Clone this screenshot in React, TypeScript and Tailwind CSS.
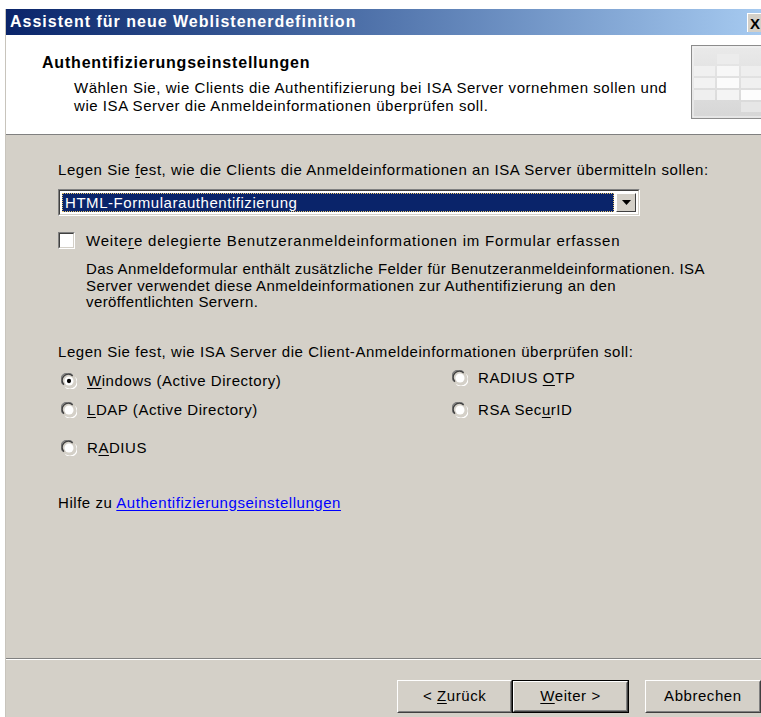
import React from "react";

const ui = { fontFamily: '"Liberation Sans", Arial, sans-serif' };

const Acc = ({ children }: { children: React.ReactNode }) => (
  <span className="underline underline-offset-2">{children}</span>
);

const Radio = ({ checked }: { checked?: boolean }) => (
  <svg width="16" height="16" viewBox="0 0 12 12" className="shrink-0">
    <path d="M1.5 8.5 A4.5 4.5 0 0 1 8.5 1.5" fill="none" stroke="#808080" strokeWidth="1" />
    <path d="M2.2 8.8 A3.8 3.8 0 0 1 8.8 2.2" fill="none" stroke="#404040" strokeWidth="1" />
    <path d="M3.5 10.5 A4.5 4.5 0 0 0 10.5 3.5" fill="none" stroke="#ffffff" strokeWidth="1" />
    <path d="M3.2 9.8 A3.8 3.8 0 0 0 9.8 3.2" fill="none" stroke="#d4d0c8" strokeWidth="1" />
    <circle cx="6" cy="6" r="3.4" fill="#ffffff" />
    {checked && <circle cx="6" cy="6" r="1.6" fill="#000000" />}
  </svg>
);

const Button = ({
  children,
  primary,
  className,
}: {
  children: React.ReactNode;
  primary?: boolean;
  className?: string;
}) => (
  <div
    className={`h-[33px] flex ${primary ? "border border-black" : ""} ${className ?? ""}`}
  >
    <div className="flex-1 border border-t-white border-l-white border-r-[#404040] border-b-[#404040]">
      <div className="h-full flex items-center justify-center border border-t-[#d4d0c8] border-l-[#d4d0c8] border-r-[#808080] border-b-[#808080] text-black">
        <span>{children}</span>
      </div>
    </div>
  </div>
);

const HeaderGraphic = () => (
  <svg width="70" height="74" viewBox="0 0 70 74">
    <defs>
      <linearGradient id="hg" x1="0" y1="0" x2="0" y2="1">
        <stop offset="0" stopColor="#eaeaea" />
        <stop offset="1" stopColor="#d6d6d6" />
      </linearGradient>
    </defs>
    <rect x="0.5" y="0.5" width="70" height="73" fill="url(#hg)" stroke="#8c8c8c" />
    <rect x="2" y="2" width="70" height="70" fill="none" stroke="#f4f4f4" />
    <rect x="26" y="9" width="22" height="10" fill="#ececec" />
    <rect x="3" y="21" width="21" height="10" fill="#f0f0f0" />
    <rect x="26" y="21" width="22" height="10" fill="#f7f7f7" />
    <rect x="50" y="21" width="20" height="10" fill="#eeeeee" />
    <rect x="3" y="33" width="21" height="10" fill="#f2f2f2" />
    <rect x="26" y="33" width="22" height="10" fill="#fbfbfb" />
    <rect x="50" y="33" width="20" height="10" fill="#f0f0f0" />
    <rect x="3" y="45" width="21" height="10" fill="#efefef" />
    <rect x="26" y="45" width="22" height="10" fill="#f4f4f4" />
    <rect x="50" y="45" width="20" height="10" fill="#fdfdfd" />
    <rect x="50" y="57" width="20" height="10" fill="#e6e6e6" />
  </svg>
);

export default function App() {
  return (
    <div
      className="w-[761px] h-[717px] bg-white pt-[9px] pl-[5px] overflow-hidden text-[15px] tracking-[0.55px]"
      style={ui}
    >
      <div className="h-full flex flex-col bg-[#d4d0c8] border-l border-[#c8c4bc]">
        {/* title bar */}
        <div className="h-[26px] shrink-0 flex items-center justify-between bg-gradient-to-r from-[#0a246a] to-[#a6caf0]">
          <span className="pl-[4px] text-white font-bold text-[16px] tracking-[1px]">
            Assistent für neue Weblistenerdefinition
          </span>
          <div className="w-[14px] h-[19px] mt-[1px] bg-[#d4d0c8] border-t border-l border-white flex items-center pl-[2px] overflow-hidden">
            <span className="text-[15px] font-bold leading-none text-black tracking-normal">X</span>
          </div>
        </div>

        {/* header */}
        <div className="h-[100px] shrink-0 bg-white border-b border-[#808080] flex justify-between">
          <div className="pl-[36px] pt-[18px]">
            <div className="font-bold text-[16px] tracking-[0.8px] leading-[19px] text-black">
              Authentifizierungseinstellungen
            </div>
            <div className="pl-[32px] pt-[7px] leading-[18px] text-black">
              <div>Wählen Sie, wie Clients die Authentifizierung bei ISA Server vornehmen sollen und</div>
              <div>wie ISA Server die Anmeldeinformationen überprüfen soll.</div>
            </div>
          </div>
          <div className="pt-[10px] shrink-0">
            <HeaderGraphic />
          </div>
        </div>

        {/* body */}
        <div className="flex-1 pl-[52px] text-black">
          <div className="mt-[26px] leading-[17px]">
            Legen Sie <Acc>f</Acc>est, wie die Clients die Anmeldeinformationen an ISA Server übermitteln sollen:
          </div>

          <div className="mt-[11px] w-[582px] h-[27px] border border-t-[#808080] border-l-[#808080] border-r-white border-b-white">
            <div className="h-full border border-t-[#404040] border-l-[#404040] border-r-[#d4d0c8] border-b-[#d4d0c8] bg-white flex items-center p-[2px] gap-[2px]">
              <div className="flex-1 h-full bg-[#0a246a] border border-dotted border-[#e6c36a] flex items-center pl-[2px]">
                <span className="text-white leading-none">HTML-Formularauthentifizierung</span>
              </div>
              <div className="w-[20px] h-full bg-[#d4d0c8] border border-t-white border-l-white border-r-[#404040] border-b-[#404040] flex items-center justify-center">
                <svg width="9" height="5" viewBox="0 0 9 5">
                  <path d="M0 0 H9 L4.5 5 Z" fill="#000" />
                </svg>
              </div>
            </div>
          </div>

          <div className="mt-[16px] flex items-center h-[17px] gap-[11px]">
            <div className="w-[17px] h-[17px] shrink-0 border border-t-[#808080] border-l-[#808080] border-r-white border-b-white">
              <div className="w-full h-full bg-white border border-t-[#404040] border-l-[#404040] border-r-[#d4d0c8] border-b-[#d4d0c8]" />
            </div>
            <span className="leading-none tracking-[0.8px]">
              Weite<Acc>r</Acc>e delegierte Benutzeranmeldeinformationen im Formular erfassen
            </span>
          </div>

          <div className="mt-[12px] pl-[28px] leading-[16.5px] whitespace-nowrap tracking-[0.4px]">
            Das Anmeldeformular enthält zusätzliche Felder für Benutzeranmeldeinformationen. ISA
            <br />
            Server verwendet diese Anmeldeinformationen zur Authentifizierung an den
            <br />
            veröffentlichten Servern.
          </div>

          <div className="mt-[32px] leading-[17px]">
            Legen Sie fest, wie ISA Server die Client-Anmeldeinformationen überprüfen soll:
          </div>

          <div className="flex">
            <div className="w-[394px] pl-[3px] flex flex-col">
              <div className="mt-[13px] h-[17px] flex items-center gap-[10px]">
                <Radio checked />
                <span><Acc>W</Acc>indows (Active Directory)</span>
              </div>
              <div className="mt-[12px] h-[17px] flex items-center gap-[10px]">
                <Radio />
                <span><Acc>L</Acc>DAP (Active Directory)</span>
              </div>
              <div className="mt-[21px] h-[17px] flex items-center gap-[10px]">
                <Radio />
                <span>R<Acc>A</Acc>DIUS</span>
              </div>
            </div>
            <div className="flex flex-col">
              <div className="mt-[10px] h-[17px] flex items-center gap-[10px]">
                <Radio />
                <span>RADIUS <Acc>O</Acc>TP</span>
              </div>
              <div className="mt-[15px] h-[17px] flex items-center gap-[10px]">
                <Radio />
                <span>RSA Sec<Acc>u</Acc>rID</span>
              </div>
            </div>
          </div>

          <div className="mt-[37px] leading-[17px]">
            Hilfe zu{" "}
            <span className="text-[#0000ff] underline underline-offset-2">
              Authentifizierungseinstellungen
            </span>
          </div>
        </div>

        {/* footer */}
        <div className="shrink-0 border-t border-[#808080]">
          <div className="border-t border-white h-[21px]" />
          <div className="flex pl-[391px] pb-[4px]">
            <Button className="w-[116px]">
              &lt; <Acc>Z</Acc>urück
            </Button>
            <Button primary className="w-[117px]">
              <Acc>W</Acc>eiter &gt;
            </Button>
            <Button className="w-[117px] ml-[16px]">Abbrechen</Button>
          </div>
        </div>
      </div>
    </div>
  );
}
